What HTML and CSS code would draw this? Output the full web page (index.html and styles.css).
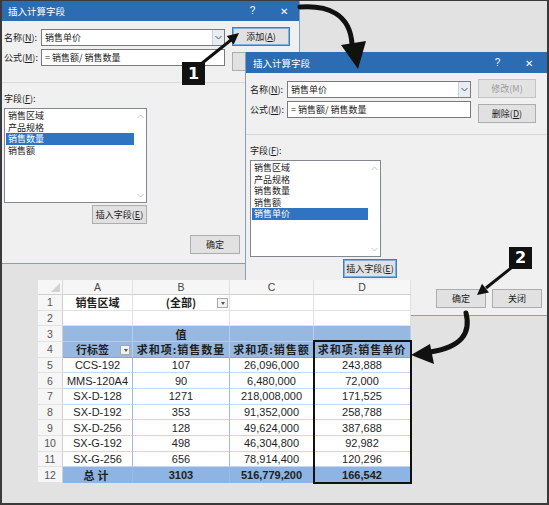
FILE: index.html
```html
<!DOCTYPE html>
<html lang="zh-CN">
<head>
<meta charset="utf-8">
<title>插入计算字段</title>
<link rel="stylesheet" href="styles.css">
</head>
<body>
<div class="screen">

  <section class="dlg dlg1">
    <header class="titlebar"><span class="title">插入计算字段</span><span class="tb-help">?</span><span class="tb-close">✕</span></header>
    <div class="dlg-body">
      <div class="top">
        <div class="fields">
          <div class="frow"><span class="lbl">名称(<u>N</u>):</span><div class="box combo"><span class="val">销售单价</span><span class="dd"><svg width="7" height="5" viewBox="0 0 7 5"><path d="M0.5 1 L3.5 4 L6.5 1" fill="none" stroke="#555" stroke-width="1"/></svg></span></div></div>
          <div class="frow"><span class="lbl">公式(<u>M</u>):</span><div class="box"><span class="val">= 销售额/ 销售数量</span></div></div>
        </div>
        <div class="btns">
          <div class="btn focus">添加(<u>A</u>)</div>
          <div class="btn"></div>
        </div>
      </div>
      <div class="sep"></div>
      <div class="lcol">
        <div class="llabel">字段(<u>F</u>):</div>
        <div class="listbox">
          <div class="items">
            <div class="item">销售区域</div>
            <div class="item">产品规格</div>
            <div class="item sel">销售数量</div>
            <div class="item">销售额</div>
          </div>
          <div class="scroll">
            <svg width="7" height="5" viewBox="0 0 7 5"><path d="M0.5 4 L3.5 1 L6.5 4" fill="none" stroke="#c4c4c4" stroke-width="1"/></svg>
            <svg width="7" height="5" viewBox="0 0 7 5"><path d="M0.5 1 L3.5 4 L6.5 1" fill="none" stroke="#c4c4c4" stroke-width="1"/></svg>
          </div>
        </div>
        <div class="btn insert">插入字段(<u>E</u>)</div>
      </div>
      <div class="footer"><div class="btn sm">确定</div><div class="btn sm"></div></div>
    </div>
  </section>

  <section class="dlg dlg2">
    <header class="titlebar"><span class="title">插入计算字段</span><span class="tb-help">?</span><span class="tb-close">✕</span></header>
    <div class="dlg-body">
      <div class="top">
        <div class="fields">
          <div class="frow"><span class="lbl">名称(<u>N</u>):</span><div class="box combo"><span class="val">销售单价</span><span class="dd"><svg width="7" height="5" viewBox="0 0 7 5"><path d="M0.5 1 L3.5 4 L6.5 1" fill="none" stroke="#555" stroke-width="1"/></svg></span></div></div>
          <div class="frow"><span class="lbl">公式(<u>M</u>):</span><div class="box"><span class="val">= 销售额/ 销售数量</span></div></div>
        </div>
        <div class="btns">
          <div class="btn disabled">修改(M)</div>
          <div class="btn">删除(<u>D</u>)</div>
        </div>
      </div>
      <div class="sep"></div>
      <div class="lcol">
        <div class="llabel">字段(<u>F</u>):</div>
        <div class="listbox">
          <div class="items">
            <div class="item">销售区域</div>
            <div class="item">产品规格</div>
            <div class="item">销售数量</div>
            <div class="item">销售额</div>
            <div class="item sel">销售单价</div>
          </div>
          <div class="scroll">
            <svg width="7" height="5" viewBox="0 0 7 5"><path d="M0.5 4 L3.5 1 L6.5 4" fill="none" stroke="#c4c4c4" stroke-width="1"/></svg>
            <svg width="7" height="5" viewBox="0 0 7 5"><path d="M0.5 1 L3.5 4 L6.5 1" fill="none" stroke="#c4c4c4" stroke-width="1"/></svg>
          </div>
        </div>
        <div class="btn insert focus">插入字段(<u>E</u>)</div>
      </div>
      <div class="footer"><div class="btn sm">确定</div><div class="btn sm">关闭</div></div>
    </div>
  </section>

  <div class="sheet">
    <div class="corner"></div><div class="colh">A</div><div class="colh">B</div><div class="colh">C</div><div class="colh">D</div>

    <div class="rowh">1</div><div class="c pl b">销售区域</div><div class="c pl b filt">(全部)<span class="fdd"></span></div><div class="c pl"></div><div class="c pl"></div>
    <div class="rowh">2</div><div class="c pl"></div><div class="c pl"></div><div class="c pl"></div><div class="c pl"></div>
    <div class="rowh">3</div><div class="c hd"></div><div class="c hd b">值</div><div class="c hd"></div><div class="c hd"></div>
    <div class="rowh">4</div><div class="c hd b h4 lab">行标签<span class="fdd"></span></div><div class="c hd b h4 ls">求和项:销售数量</div><div class="c hd b h4 ls">求和项:销售额</div><div class="c hd b h4 ls">求和项:销售单价</div>
    <div class="rowh">5</div><div class="c dt">CCS-192</div><div class="c dt">107</div><div class="c dt">26,096,000</div><div class="c dt">243,888</div>
    <div class="rowh">6</div><div class="c dt">MMS-120A4</div><div class="c dt">90</div><div class="c dt">6,480,000</div><div class="c dt">72,000</div>
    <div class="rowh">7</div><div class="c dt">SX-D-128</div><div class="c dt">1271</div><div class="c dt">218,008,000</div><div class="c dt">171,525</div>
    <div class="rowh">8</div><div class="c dt">SX-D-192</div><div class="c dt">353</div><div class="c dt">91,352,000</div><div class="c dt">258,788</div>
    <div class="rowh">9</div><div class="c dt">SX-D-256</div><div class="c dt">128</div><div class="c dt">49,624,000</div><div class="c dt">387,688</div>
    <div class="rowh">10</div><div class="c dt">SX-G-192</div><div class="c dt">498</div><div class="c dt">46,304,800</div><div class="c dt">92,982</div>
    <div class="rowh">11</div><div class="c dt">SX-G-256</div><div class="c dt">656</div><div class="c dt">78,914,400</div><div class="c dt">120,296</div>
    <div class="rowh">12</div><div class="c tt b cjk">总计</div><div class="c tt b">3103</div><div class="c tt b">516,779,200</div><div class="c tt b">166,542</div>
  </div>

  <div class="dbox"></div>

  <svg class="arrows" width="549" height="505" viewBox="0 0 549 505">
    <path d="M300 7 C 328 5, 350 14, 352 44" fill="none" stroke="#111" stroke-width="5" stroke-linecap="round"/>
    <polygon points="341,45 366,41 358,69" fill="#111"/>
    <line x1="201" y1="64" x2="231" y2="40" stroke="#111" stroke-width="3"/>
    <polygon points="239,33 233.7,44.5 226.7,36" fill="#111"/>
    <line x1="511" y1="268" x2="486" y2="288" stroke="#111" stroke-width="3"/>
    <polygon points="477,295 489,292.5 482,283.8" fill="#111"/>
    <path d="M466 313 C 471 333, 462 347, 430 352" fill="none" stroke="#111" stroke-width="5" stroke-linecap="round"/>
    <polygon points="411,355 430,344 434,364" fill="#111"/>
  </svg>

  <div class="badge b1">1</div>
  <div class="badge b2">2</div>
</div>
</body>
</html>
```

FILE: styles.css
```css
* { box-sizing: border-box; }
html, body { margin: 0; padding: 0; }
body {
  background: #e2e2e2;
  font-family: "Noto Sans CJK SC", "Liberation Sans", sans-serif;
}
.screen {
  position: relative;
  width: 549px;
  height: 505px;
  overflow: hidden;
  background: #e2e2e2;
}
.screen::after {
  content: "";
  position: absolute;
  inset: 0;
  border: 2px solid #3a3a3a;
  border-top-width: 1px;
  pointer-events: none;
  z-index: 20;
}

/* dialogs */
.dlg {
  position: absolute;
  background: #f0f0f0;
  border: 1px solid #8b9db3;
  border-top: 0;
  font-size: 9px;
  line-height: 12px;
  color: #1b1b1b;
}
.dlg1 { left: 0; top: 0; width: 300px; height: 264px; z-index: 1; }
.dlg2 { left: 245px; top: 52px; width: 306px; height: 264px; z-index: 2; }

.titlebar {
  height: 21px;
  background: #2b6cb3;
  color: #fff;
  display: flex;
  align-items: center;
  padding-left: 7px;
  font-size: 9.5px;
}
.dlg2 .titlebar { padding-right: 6px; }
.title { flex: 1; }
.tb-help { width: 33px; text-align: center; font-family: "Liberation Sans", sans-serif; font-size: 10px; }
.tb-close { width: 30px; text-align: center; font-size: 10px; }

.dlg-body { padding-left: 3px; }
.dlg2 .dlg-body { padding-left: 4px; }

.top { display: flex; align-items: flex-start; }
.fields { display: flex; flex-direction: column; gap: 3px; padding-top: 8px; }
.frow { display: flex; align-items: center; }
.lbl { width: 37px; white-space: nowrap; }
.box {
  width: 184px;
  height: 17px;
  background: #fff;
  border: 1px solid #7a7a7a;
  display: flex;
  align-items: center;
}
.val { flex: 1; padding-left: 3px; white-space: nowrap; }
.dd {
  width: 12px;
  height: 15px;
  display: flex;
  align-items: center;
  justify-content: center;
  background: #e8edf3;
  border-left: 1px solid #c9d3df;
}
.btns { display: flex; flex-direction: column; gap: 6px; padding-top: 6px; margin-left: 7px; }

.btn {
  width: 58px;
  height: 19px;
  background: #e1e1e1;
  border: 1px solid #adadad;
  display: flex;
  align-items: center;
  justify-content: center;
  white-space: nowrap;
}
.btn.focus { border: 1px solid #3d7fc4; box-shadow: inset 0 0 0 1px #7eb0e0; }
.btn.disabled { color: #9c9c9c; border-color: #c4c4c4; background: #e3e3e3; }
.btn.sm { width: 50px; }

.sep { height: 1px; background: #d9d9d9; margin: 11px -4px 0 -4px; }

.lcol { display: flex; flex-direction: column; align-items: flex-end; width: 143px; }
.dlg2 .lcol { width: 147px; }
.llabel { align-self: flex-start; margin-top: 10px; }
.listbox {
  margin-top: 3px;
  width: 143px;
  height: 95px;
  background: #fff;
  border: 1px solid #828790;
  display: flex;
  align-self: flex-start;
}
.dlg2 .listbox { width: 131px; height: 97px; }
.items { flex: 1; padding-top: 1px; padding-left: 1px; }
.item { height: 11.5px; line-height: 11.5px; padding-left: 2px; white-space: nowrap; }
.item.sel { background: #2f74c3; color: #fff; }
.scroll {
  width: 12px;
  display: flex;
  flex-direction: column;
  justify-content: space-between;
  align-items: center;
  padding: 5px 0 4px;
}
.btn.insert { width: 55px; margin-top: 2px; }
.dlg2 .btn.insert { width: 54px; }

.footer { display: flex; gap: 8px; margin-top: 11px; padding-left: 186px; }
.dlg2 .footer { padding-left: 186px; gap: 6px; }

/* spreadsheet */
.sheet {
  position: absolute;
  left: 38px;
  top: 280px;
  z-index: 3;
  display: grid;
  grid-template-columns: 25px 70px 97px 84px 97px;
  grid-template-rows: 15px repeat(12, 15.667px);
  background: #fff;
  font-family: "Liberation Sans", Arial, sans-serif;
  font-size: 11px;
  color: #1e1e1e;
}
.corner {
  position: relative;
  background: #f6f6f6;
  border-right: 1px solid #d8d8d8;
  border-bottom: 1px solid #d0d0d0;
}
.corner::after {
  content: "";
  position: absolute;
  right: 2px;
  bottom: 2px;
  border-left: 9px solid transparent;
  border-bottom: 9px solid #d2d2d2;
}
.colh {
  background: #f6f6f6;
  border-right: 1px solid #e0e0e0;
  border-bottom: 1px solid #d0d0d0;
  color: #474747;
  font-size: 10.5px;
  display: flex;
  align-items: center;
  justify-content: center;
}
.rowh {
  background: #f6f6f6;
  border-right: 1px solid #d0d0d0;
  border-bottom: 1px solid #e2e2e2;
  color: #555;
  font-size: 10.5px;
  display: flex;
  align-items: center;
  justify-content: center;
}
.c {
  position: relative;
  display: flex;
  align-items: center;
  justify-content: center;
  white-space: nowrap;
  overflow: hidden;
}
.b { font-weight: 700; }
.pl, .hd, .h4, .cjk { font-family: "Noto Sans CJK SC", "Liberation Sans", sans-serif; }
.pl { border-right: 1px solid #e2e2e2; border-bottom: 1px solid #e2e2e2; }
.hd { background: #97b9e1; border-right: 1px solid #b7cde9; border-bottom: 1px solid #b7cde9; }
.h4 { border-bottom: 1px solid #7fa6d4; }
.ls { letter-spacing: 1px; }
.lab { padding-right: 10px; }
.dt { border-right: 1px solid #9bbbe0; border-bottom: 1px solid #c6d8ee; }
.tt { background: #8db4e2; border-right: 1px solid #9bbbe0; }
.tt.cjk { letter-spacing: 3px; }

.fdd {
  position: absolute;
  right: 1px;
  top: 3px;
  width: 11px;
  height: 10px;
  background: #f2f2f2;
  border: 1px solid #a8a8a8;
}
.fdd::after {
  content: "";
  position: absolute;
  left: 2.5px;
  top: 3px;
  border-left: 2.5px solid transparent;
  border-right: 2.5px solid transparent;
  border-top: 3px solid #555;
}
.lab .fdd { right: 2px; top: 3px; width: 10px; height: 10px; }

.dbox {
  position: absolute;
  left: 313px;
  top: 340px;
  width: 99px;
  height: 144px;
  border: 2px solid #111;
  z-index: 4;
}

.arrows { position: absolute; left: 0; top: 0; z-index: 6; pointer-events: none; }

.badge {
  position: absolute;
  z-index: 7;
  width: 23px;
  height: 23px;
  background: #111;
  color: #fff;
  font-family: "DejaVu Sans", sans-serif;
  font-weight: 700;
  font-size: 16px;
  line-height: 23px;
  text-align: center;
}
.b1 { left: 182px; top: 62px; }
.b2 { left: 509px; top: 247px; height: 22px; line-height: 22px; }
```
